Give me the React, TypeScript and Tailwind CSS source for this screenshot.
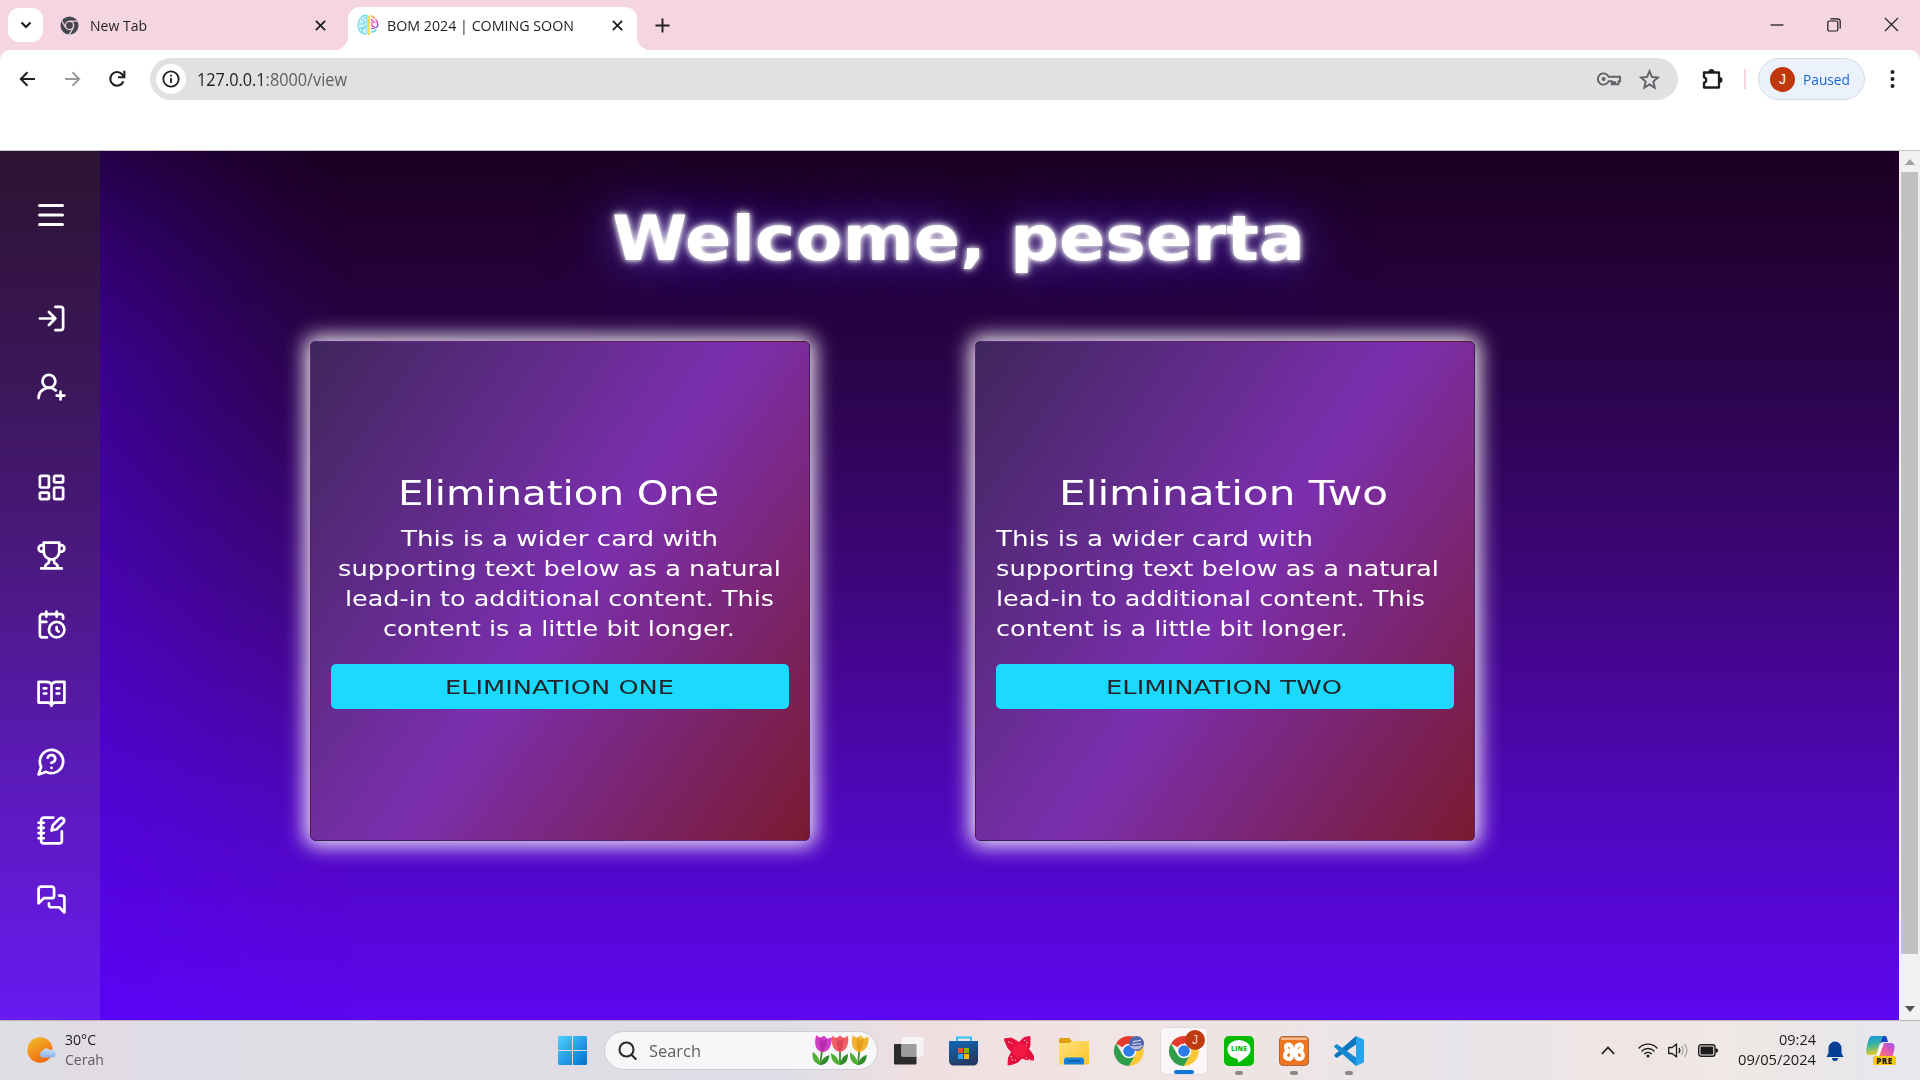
import { useLayoutEffect, useRef, type ReactNode } from "react";

/* Single line of text stretched horizontally to the width of its box. */
function Fit({ className, children }: { className: string; children: ReactNode }) {
  const box = useRef<HTMLSpanElement>(null);
  const inner = useRef<HTMLSpanElement>(null);
  useLayoutEffect(() => {
    const b = box.current;
    const i = inner.current;
    if (!b || !i) return;
    i.style.transform = "none";
    const natural = i.getBoundingClientRect().width;
    if (natural > 0) i.style.transform = `scaleX(${b.clientWidth / natural})`;
  }, []);
  return (
    <span ref={box} className={`block whitespace-nowrap text-left ${className}`}>
      <span ref={inner} className="inline-block origin-left align-top">
        {children}
      </span>
    </span>
  );
}

function Close({ size = 13, w = 1.9 }: { size?: number; w?: number }) {
  return (
    <svg width={size} height={size} viewBox="0 0 14 14" fill="none" stroke="#1f1f1f" strokeWidth={w}>
      <path d="M2 2l10 10M12 2L2 12" />
    </svg>
  );
}

function BrainIcon() {
  return (
    <svg width="22" height="22" viewBox="0 0 22 22" fill="none" strokeWidth="1.3">
      <path d="M10 1.500C6 0.500 4.500 3 4 4 1.500 5 1.500 8 1.500 9.500 0 12 1.500 14 2 15c0 3 3 4 4 4 2 2 4 1 4 0z" fill="#d4f5fa" />
      <g stroke="#7fdcec">
        <path d="M10 1.5C6 0.5 4.5 3 4 4 1.500 5 1.500 8 1.500 9.500 0 12 1.500 14 2 15c0 3 3 4 4 4 2 2 4 1 4 0z" />
        <path d="M4 5l3 2v3M2 10h4l3-2M2.500 14h3l2-2h2M5 18v-3l4-1M7 2l1.500 3" />
      </g>
      <path d="M12 1.500v19.500" stroke="#f5d84a" strokeWidth="1.8" />
      <path d="M14 2c2 0 3 1 4 3" stroke="#f3a64d" />
      <path d="M14 5l4 4M15 8v4l3 1M18.500 5.500c2 2 2.500 4 2 7" stroke="#e83fae" />
      <path d="M14 15l5-1.500c2-1 2-2 2-3" stroke="#7c5be6" />
      <path d="M14 18c3 0 5-1 5-3" stroke="#45d9e8" />
    </svg>
  );
}

function TabStrip() {
  return (
    <div className="flex h-[50px] w-full bg-[#f6d5e3]">
      <button className="ml-2 mt-2 flex h-[34px] w-[35px] shrink-0 items-center justify-center rounded-[11px] bg-white">
        <svg width="12" height="8" viewBox="0 0 12 8" fill="none" stroke="#1f1f1f" strokeWidth="2.2">
          <path d="M1.500 1.500L6 6l4.500-4.500" />
        </svg>
      </button>
      <div className="flex h-[50px] w-[305px] shrink-0 items-center pl-[17px]">
        <svg width="19" height="19" viewBox="0 0 20 20">
          <circle cx="10" cy="10" r="9.500" fill="#45484c" />
          <circle cx="10" cy="10" r="5" fill="#f6d5e3" />
          <circle cx="10" cy="10" r="3.600" fill="#45484c" />
          <path d="M10 5.500h9M6 12.300L1.700 4.800M14 12.300L9.700 19.800" stroke="#f6d5e3" strokeWidth="1.3" />
        </svg>
        <Fit className="ml-[11px] w-[57px] text-[15px] leading-[20px] text-[#1f1f1f]">New Tab</Fit>
        <span className="ml-[167px]">
          <Close />
        </span>
      </div>
      <div className="relative flex h-[50px] w-[289px] shrink-0 items-center">
        <div className="absolute left-0 top-[7px] h-[43px] w-full rounded-t-[12px] bg-white" />
        <div className="absolute -left-[14px] bottom-0 h-[14px] w-[14px] bg-[radial-gradient(circle_at_0_0,transparent_14px,white_14.500px)]" />
        <div className="absolute -right-[14px] bottom-0 h-[14px] w-[14px] bg-[radial-gradient(circle_at_100%_0,transparent_14px,white_14.500px)]" />
        <span className="relative ml-[9px]">
          <BrainIcon />
        </span>
        <Fit className="relative ml-[8px] w-[187px] text-[15px] leading-[20px] text-[#1f1f1f]">
          BOM 2024 | COMING SOON
        </Fit>
        <span className="relative ml-[37px]">
          <Close />
        </span>
      </div>
      <div className="flex h-[50px] items-center pl-[18px]">
        <svg width="15" height="15" viewBox="0 0 15 15" stroke="#1f1f1f" strokeWidth="1.900">
          <path d="M7.500 0.500v14M0.500 7.500h14" />
        </svg>
      </div>
      <div className="ml-auto flex h-[50px] items-center gap-[43px] pb-px pr-[21px]">
        <svg width="14" height="14" viewBox="0 0 14 14">
          <path d="M0.500 7h13" stroke="#111" strokeWidth="1.200" />
        </svg>
        <svg width="14" height="14" viewBox="0 0 14 14" fill="none" stroke="#1a1a1a" strokeWidth="1.200">
          <rect x="0.800" y="3" width="10" height="10" rx="1.500" />
          <path d="M3.500 0.800h7a2.700 2.700 0 0 1 2.700 2.700v7" />
        </svg>
        <svg width="15" height="15" viewBox="0 0 15 15" stroke="#222" strokeWidth="1.200">
          <path d="M1 1l13 13M14 1L1 14" />
        </svg>
      </div>
    </div>
  );
}

function Toolbar() {
  return (
    <div className="h-[101px] w-full bg-[#f6d5e3]">
      <div className="flex h-[101px] w-full items-start rounded-t-[10px] border-b border-[#c3c6c4] bg-white pt-[8px]">
        <div className="flex h-[42px] w-[150px] shrink-0 items-center">
          <svg className="ml-[19px]" width="17" height="16" viewBox="0 0 17 16" fill="none" stroke="#1f1f1f" strokeWidth="2">
            <path d="M16 8H2M8.500 1.200L1.800 8l6.700 6.800" />
          </svg>
          <svg className="ml-[28px]" width="17" height="16" viewBox="0 0 17 16" fill="none" stroke="#9c9c9c" strokeWidth="2">
            <path d="M1 8h14M8.500 1.200L15.200 8l-6.700 6.800" />
          </svg>
          <svg className="ml-[27px]" width="18" height="18" viewBox="0 0 18 18" fill="none" stroke="#1f1f1f" strokeWidth="2.100">
            <path d="M15.400 11.300a6.800 6.800 0 1 1-1.300-7L16 6.500" />
            <path d="M16.300 0.800v6.400H10" />
          </svg>
        </div>
        <div className="flex h-[42px] w-[1528px] shrink-0 items-center rounded-full bg-[#e1e1e1] pl-[6px]">
          <div className="flex h-[30px] w-[30px] items-center justify-center rounded-full bg-white">
            <svg width="18" height="18" viewBox="0 0 18 18" fill="none" stroke="#1f1f1f" strokeWidth="1.800">
              <circle cx="9" cy="9" r="7.700" />
              <path d="M9 8v5M9 4.800v1.800" />
            </svg>
          </div>
          <Fit className="ml-[11px] w-[150px] text-[17.500px] leading-[24px] text-[#5f6062]">
            <span className="text-[#1f1f1f]">127.0.0.1</span>:8000/view
          </Fit>
          <svg className="ml-auto" width="24" height="14" viewBox="0 0 24 14" fill="none" stroke="#5f6368" strokeWidth="1.900">
            <path d="M11.600 4.700a5.600 5.600 0 1 0 0 4.600h3.200v3h1.600v-2h1.600v2h3.400V9.500H23V4.700z" />
            <circle cx="6.600" cy="7" r="2" fill="#5f6368" stroke="none" />
          </svg>
          <svg className="ml-[18px] mr-[18px]" width="21" height="21" viewBox="0 0 24 24" fill="none" stroke="#5f6368" strokeWidth="2.200">
            <path d="M12 2.500l2.700 6.600 7.100.6-5.400 4.700 1.600 7-6-3.700-6 3.700 1.600-7L2.200 9.700l7.100-.6z" />
          </svg>
        </div>
        <div className="flex h-[42px] flex-1 items-center">
          <svg className="ml-[23px]" width="22" height="22" viewBox="0 0 22 22">
            <path d="M3 4.500h15v15H3v-4.800c3-.5 3-4.900 0-5.400z" fill="none" stroke="#1f1f1f" strokeWidth="2.300" strokeLinejoin="round" />
            <path d="M7.500 4a3 3 0 0 1 6 0zM18.500 9a3 3 0 0 1 0 6z" fill="#1f1f1f" />
          </svg>
          <div className="ml-[21px] h-[20px] w-[2px] bg-[#f6d5e3]" />
          <div className="ml-[12px] flex h-[42px] w-[107px] items-center rounded-full border border-[#d5dbe4] bg-[#ecf2fb] pl-[11px]">
            <div className="flex h-[25px] w-[25px] items-center justify-center rounded-full bg-[#c1370c] font-['Liberation_Sans',sans-serif] text-[14px] leading-none text-white">
              J
            </div>
            <Fit className="ml-[8px] w-[47px] text-[15px] leading-[20px] text-[#1a66d0]">Paused</Fit>
          </div>
          <svg className="ml-[25px]" width="5" height="20" viewBox="0 0 5 20" fill="#1f1f1f">
            <circle cx="2.500" cy="3" r="2" />
            <circle cx="2.500" cy="10" r="2" />
            <circle cx="2.500" cy="17" r="2" />
          </svg>
        </div>
      </div>
    </div>
  );
}

function SideIcon({ children }: { children: ReactNode }) {
  return (
    <svg
      className="shrink-0"
      width="31"
      height="31"
      viewBox="0 0 24 24"
      fill="none"
      stroke="white"
      strokeWidth="2.1"
      strokeLinecap="round"
      strokeLinejoin="round"
    >
      {children}
    </svg>
  );
}

function Sidebar() {
  return (
    <aside className="relative flex w-[100px] shrink-0 flex-col items-center bg-white/8 pl-[2px]">
      {/* soft violet glow cast to the right of the bar */}
      <div className="pointer-events-none absolute left-full top-0 h-full w-[250px] bg-[linear-gradient(90deg,rgba(85,0,255,0.38)_0%,rgba(85,0,255,0.28)_25%,rgba(85,0,255,0.16)_50%,rgba(85,0,255,0.06)_75%,rgba(85,0,255,0)_100%)] [mask-image:linear-gradient(180deg,rgba(0,0,0,0.45)_0px,rgba(0,0,0,0.75)_100px,black_220px)]" />
      <svg className="mt-[51px]" width="26" height="26" viewBox="0 0 26 26" stroke="white" strokeWidth="3" strokeLinecap="round">
        <path d="M1.500 3.500h23M1.500 13h23M1.500 22.500h23" />
      </svg>
      <div className="mt-[74.500px] flex flex-col gap-[37.700px]">
        <SideIcon>
          <path d="M15 3h4a2 2 0 0 1 2 2v14a2 2 0 0 1-2 2h-4M10 17l5-5-5-5M15 12H3" />
        </SideIcon>
        <SideIcon>
          <path d="M2 21a8 8 0 0 1 13.292-6" />
          <circle cx="10" cy="8" r="5" />
          <path d="M19 16v6M22 19h-6" />
        </SideIcon>
      </div>
      <div className="mt-[69.500px] flex flex-col gap-[37.700px]">
        <SideIcon>
          <rect x="3" y="3" width="7" height="9" rx="1" />
          <rect x="14" y="3" width="7" height="5" rx="1" />
          <rect x="14" y="12" width="7" height="9" rx="1" />
          <rect x="3" y="16" width="7" height="5" rx="1" />
        </SideIcon>
        <SideIcon>
          <path d="M6 9H4.500a2.500 2.500 0 0 1 0-5H6M18 9h1.500a2.500 2.500 0 0 0 0-5H18M4 22h16M10 14.660V17c0 .55-.47.98-.97 1.210C7.850 18.750 7 20.240 7 22M14 14.660V17c0 .55.47.98.97 1.210C16.150 18.750 17 20.240 17 22M18 2H6v7a6 6 0 0 0 12 0V2Z" />
        </SideIcon>
        <SideIcon>
          <path d="M21 7.500V6a2 2 0 0 0-2-2H5a2 2 0 0 0-2 2v14a2 2 0 0 0 2 2h3.500M16 2v4M8 2v4M3 10h5M17.500 17.500L16 16.300V14" />
          <circle cx="16" cy="16" r="6" />
        </SideIcon>
        <SideIcon>
          <path d="M12 5.500C11.500 3.500 9.500 3 8 3H2v16h7c1.500 0 3 .8 3 2.500 0-1.700 1.500-2.500 3-2.500h7V3h-6c-1.500 0-3.500.5-4 2.500zV21M6 8h2M6 12h2M16 8h2M16 12h2" />
        </SideIcon>
        <SideIcon>
          <path d="M7.900 20A9 9 0 1 0 4 16.100L2 22ZM9.090 9a3 3 0 0 1 5.830 1c0 2-3 3-3 3M12 17h.01" />
        </SideIcon>
        <SideIcon>
          <path d="M13.400 2H6a2 2 0 0 0-2 2v16a2 2 0 0 0 2 2h12a2 2 0 0 0 2-2v-7.400M2 6h4M2 10h4M2 14h4M2 18h4M18.400 2.600a2.170 2.170 0 0 1 3 3L16 11l-4 1 1-4Z" />
        </SideIcon>
        <SideIcon>
          <path d="M14 9a2 2 0 0 1-2 2H6l-4 4V4c0-1.100.9-2 2-2h8a2 2 0 0 1 2 2v5ZM18 9h2a2 2 0 0 1 2 2v11l-4-4h-6a2 2 0 0 1-2-2v-1" />
        </SideIcon>
      </div>
    </aside>
  );
}

function Card({ title, titleWidth, action, actionWidth, centered }: {
  title: string;
  titleWidth: string;
  action: string;
  actionWidth: string;
  centered: boolean;
}) {
  return (
    <article className="relative flex h-[500px] w-[500px] flex-col rounded-[6px] border border-black/20 bg-[linear-gradient(125deg,#40265c_0%,#7b2fae_51%,#7a1a30_100%)] px-[20px] shadow-[0_0_20px_5px_rgba(255,255,255,0.9)]">
      <h2 className="mt-[129px] flex justify-center pr-[4px] text-[34px] leading-[44px] text-white">
        <Fit className={titleWidth}>{title}</Fit>
      </h2>
      <div className={`mt-[9px] flex flex-col text-[20.500px] leading-[30px] text-white ${centered ? "items-center pr-[2px]" : "items-start"}`}>
        <Fit className="w-[317px]">This is a wider card with</Fit>
        <Fit className="w-[443px]">supporting text below as a natural</Fit>
        <Fit className="w-[429px]">lead-in to additional content. This</Fit>
        <Fit className="w-[352px]">content is a little bit longer.</Fit>
      </div>
      <button className="mt-[20px] flex h-[45px] w-full items-center justify-center rounded-[5px] bg-[#1cdaff] pr-[2px] text-[20px] leading-[30px] text-[#212529]">
        <Fit className={actionWidth}>{action}</Fit>
      </button>
    </article>
  );
}

function Page() {
  return (
    <div className="flex h-[869px] w-full font-['DejaVu_Sans',sans-serif]">
      <div className="flex w-[1899px] shrink-0 overflow-hidden bg-[linear-gradient(180deg,#1b0021_0%,#2d0450_29%,#3f067c_50%,#4f07b8_74%,#5c07f0_100%)]">
        <Sidebar />
        <main className="flex flex-1 flex-col">
          <h1 className="ml-[512px] mt-[46px] text-[63px] font-bold leading-[84px] text-white [text-shadow:0_0_5px_#fff,0_0_10px_rgba(255,255,255,0.8),0_0_40px_rgba(92,60,210,0.75),0_0_70px_rgba(80,50,200,0.75)]">
            <Fit className="w-[693px]">Welcome, peserta</Fit>
          </h1>
          <div className="ml-[210px] mt-[60px] flex gap-[165px]">
            <Card title="Elimination One" titleWidth="w-[321px]" action="ELIMINATION ONE" actionWidth="w-[229px]" centered />
            <Card title="Elimination Two" titleWidth="w-[329px]" action="ELIMINATION TWO" actionWidth="w-[236px]" centered={false} />
          </div>
        </main>
      </div>
      <div className="flex flex-1 flex-col items-center bg-[#f1f1f1]">
        <svg className="mt-[8px]" width="10" height="6" viewBox="0 0 10 6" fill="#a3a3a3">
          <path d="M0 6l5-6 5 6z" />
        </svg>
        <div className="mt-[7px] h-[782px] w-[17px] bg-[#c1c1c1]" />
        <svg className="mt-[52px]" width="10" height="6" viewBox="0 0 10 6" fill="#505050">
          <path d="M0 0l5 6 5-6z" />
        </svg>
      </div>
    </div>
  );
}

function Tulips() {
  const flowers = [
    { x: 12, fill: "#d23fc4", dark: "#a31f9b", tilt: 8 },
    { x: 32, fill: "#f0606a", dark: "#cf3146", tilt: 0 },
    { x: 50, fill: "#f3b32e", dark: "#d98a12", tilt: 5 },
  ];
  return (
    <svg width="62" height="31" viewBox="0 0 62 31">
      {flowers.map((f) => (
        <g key={f.x} transform={`rotate(${f.tilt} ${f.x} 30)`}>
          <path d={`M${f.x} 14v16`} stroke="#3b8f2d" strokeWidth="1.800" />
          <path d={`M${f.x} 30c-1-6-4-9-9-12 0 6 2 11 9 12z`} fill="#4fae35" />
          <path d={`M${f.x} 30c1-6 3-9 8-11 0 6-2 10-8 11z`} fill="#2f8a2b" />
          <path d={`M${f.x - 8} 1l4.500 2 3.500-2.500 3.500 2.500 4.500-2c1 8-1 15-8 16-7-1-9-8-8-16z`} fill={f.fill} />
          <path d={`M${f.x - 3} 3c-1 6 0 10 3 14 3-4 4-8 3-14l-3 3z`} fill={f.dark} opacity="0.55" />
        </g>
      ))}
    </svg>
  );
}

function ChromeLogo({ children }: { children?: ReactNode }) {
  return (
    <svg className="shrink-0 overflow-visible" width="30" height="30" viewBox="0 0 30 30">
      <path d="M15 15L2 7.500A15 15 0 0 1 28 7.500H15z" fill="#e33b2e" />
      <path d="M15 15L8.500 18.750 2 7.500A15 15 0 0 0 15 30l6.500-11.250z" fill="#2f9e4b" />
      <path d="M15 8h13A15 15 0 0 1 15 30l6.500-11.250z" fill="#fcc934" />
      <circle cx="15" cy="15" r="7.300" fill="#fff" />
      <circle cx="15" cy="15" r="5.800" fill="#2b7de9" />
      {children}
    </svg>
  );
}

function Running({ children }: { children: ReactNode }) {
  return (
    <div className="relative h-[30px] w-[30px]">
      {children}
      <div className="absolute -bottom-[9px] left-[11px] h-[4px] w-[8px] rounded-full bg-[#8c8785]" />
    </div>
  );
}

function Taskbar() {
  return (
    <div className="flex h-[60px] w-full items-center border-t border-[#b9b6bf] bg-[linear-gradient(90deg,#dedfe2_0%,#e2dbe4_5%,#dddde6_11%,#dfe0e3_18%,#dfdce4_30%,#dfdee6_41%,#efdfe0_48%,#f1e4e5_58%,#eee4e4_66%,#e8e5ea_76%,#efe5e3_84%,#efe8e4_90%,#e8e6ea_97%,#e8e8ec_100%)]">
      <div className="flex h-full w-[558px] shrink-0 items-center pl-[27px]">
        <svg width="29" height="28" viewBox="0 0 29 28">
          <defs>
            <linearGradient id="sun" x1="0" y1="0" x2="0.600" y2="1">
              <stop offset="0" stopColor="#f5c22d" />
              <stop offset="1" stopColor="#f0660c" />
            </linearGradient>
            <linearGradient id="cloud" x1="0" y1="0" x2="0" y2="1">
              <stop offset="0" stopColor="#c9defa" />
              <stop offset="1" stopColor="#8fb2ea" />
            </linearGradient>
          </defs>
          <circle cx="13" cy="13" r="12.700" fill="url(#sun)" />
          <path d="M14.500 20.500a4 4 0 0 1 .2-6.200 5 5 0 0 1 8.300-1.300 3.800 3.800 0 0 1 3 7.500z" fill="url(#cloud)" />
        </svg>
        <div className="ml-[9px] flex flex-col gap-px pb-[3px] text-[14px] leading-[19px]">
          <Fit className="w-[31px] text-[#1b1b1b]">30°C</Fit>
          <Fit className="w-[39px] text-[#5c5c60]">Cerah</Fit>
        </div>
      </div>
      <svg className="shrink-0" width="29" height="29" viewBox="0 0 29 29">
        <defs>
          <linearGradient id="win" x1="0" y1="0" x2="1" y2="1">
            <stop offset="0" stopColor="#4fd0ff" />
            <stop offset="1" stopColor="#0070d1" />
          </linearGradient>
        </defs>
        <path d="M1 0h13v14H0V1zM15 0h13l1 1v13H15zM0 15h14v14H1l-1-1zM15 15h14v13l-1 1H15z" fill="url(#win)" />
      </svg>
      <div className="ml-[17px] flex h-[39px] w-[274px] shrink-0 items-center rounded-full border border-[#cfcbd3] bg-[#f7f6f8] pl-[13px]">
        <svg width="19" height="20" viewBox="0 0 19 20" fill="none" stroke="#2b2b2b" strokeWidth="2.100" strokeLinecap="round">
          <circle cx="8.500" cy="8.500" r="7" />
          <path d="M13.500 13.800l4.200 4.200" />
        </svg>
        <Fit className="ml-[12px] w-[52px] text-[16.500px] leading-[22px] text-[#606064]">Search</Fit>
        <span className="ml-auto pr-[7px]">
          <Tulips />
        </span>
      </div>
      <div className="ml-[16px] flex items-center gap-[25px]">
        <svg width="30" height="30" viewBox="0 0 30 30">
          <rect x="0" y="8" width="22.500" height="20.500" rx="1" fill="#2b2b2b" />
          <rect x="7.500" y="1" width="22" height="19.500" rx="1" fill="#f4f4f4" opacity="0.95" />
          <rect x="7.500" y="8" width="15" height="12.500" fill="#9d9d9d" />
        </svg>
        <svg width="30" height="30" viewBox="0 0 30 30">
          <defs>
            <linearGradient id="store" x1="0" y1="0" x2="0.400" y2="1">
              <stop offset="0" stopColor="#0f68b8" />
              <stop offset="1" stopColor="#233a66" />
            </linearGradient>
          </defs>
          <path d="M8 6V1.500h14V6" fill="none" stroke="#2cc3f1" strokeWidth="2" />
          <path d="M0 5h29v20a4.500 4.500 0 0 1-4.500 4.500h-20A4.500 4.500 0 0 1 0 25z" fill="url(#store)" />
          <path d="M9 12h5v5H9z" fill="#f25022" />
          <path d="M15 12h5v5h-5z" fill="#7fba00" />
          <path d="M9 18h5v5H9z" fill="#2aa9f0" />
          <path d="M15 18h5v5h-5z" fill="#ffb900" />
        </svg>
        <svg width="30" height="30" viewBox="0 0 30 30">
          <path
            d="M0 3l7-1 4 2 4 2.500 5-5 6-1v9l-1.500 3.500 2.500 3 3 5v3l-8-.5-4-1.500-4 4-5 2-5 1 .5-7 3-6-3.500-4z"
            fill="#e60f3c"
            stroke="#e60f3c"
            strokeLinejoin="round"
          />
          <circle cx="15.500" cy="14.500" r="7" fill="#f01a45" />
          <path d="M4 6l3 0 2 3M20 4l3 2-1 4M26 24l-5-3M7 20l1 4 4 0" stroke="#ffdde3" strokeWidth="1" strokeDasharray="1.500 2" fill="none" />
        </svg>
        <svg width="30" height="30" viewBox="0 0 30 30">
          <defs>
            <linearGradient id="folder" x1="0" y1="0" x2="1" y2="1">
              <stop offset="0" stopColor="#ffe07a" />
              <stop offset="1" stopColor="#fcc52b" />
            </linearGradient>
          </defs>
          <path d="M0 3.500A1.500 1.500 0 0 1 1.500 2H10l3 3v5H0z" fill="#dea10c" />
          <path d="M0 7h10l3-2h16.500a.5.5 0 0 1 .5.500v22a1 1 0 0 1-1 1H1a1 1 0 0 1-1-1z" fill="url(#folder)" />
          <path d="M5 28.500v-4a3 3 0 0 1 3-3h14a3 3 0 0 1 3 3v4z" fill="#1580d8" />
          <path d="M8.500 25h13" stroke="#0b4f9a" strokeWidth="1.200" />
        </svg>
        <ChromeLogo>
          <circle cx="22.500" cy="7.500" r="7.500" fill="#4d66b0" />
          <path d="M15.500 10c3 0 6 1 13.500-1a7.500 7.500 0 0 1-13 1.500z" fill="#b9bcdc" />
          <path d="M19 6c2-2 4 0 8-2M18 8c3 1 5-1 9 0" stroke="#dfe2f3" strokeWidth="1.200" fill="none" />
        </ChromeLogo>
        <div className="relative -mx-[9px] flex h-[48px] w-[48px] items-center justify-center rounded-[5px] border border-[#e3dada] bg-[#faf5f6]">
          <ChromeLogo />
          <div className="absolute left-[24px] top-[2px] flex h-[20px] w-[20px] items-center justify-center rounded-full bg-[#c03a10] font-['Liberation_Sans',sans-serif] text-[12px] leading-none text-[#f7d8cc]">
            J
          </div>
          <div className="absolute bottom-0 left-[13px] h-[4px] w-[20px] rounded-full bg-[#0e78d4]" />
        </div>
        <Running>
          <div className="relative flex h-[30px] w-[30px] items-center justify-center rounded-[5px] bg-[#05ba05]">
            <svg className="absolute left-0 top-0" width="30" height="30" viewBox="0 0 30 30" fill="#fff">
              <ellipse cx="15" cy="13.500" rx="11.500" ry="9.500" />
              <path d="M13 22l1.500 4.500C19 24 23 21 25 17z" />
            </svg>
            <span className="relative pb-[3px] text-[6.500px] font-black leading-none tracking-[0.200px] text-[#05ba05]">LINE</span>
          </div>
        </Running>
        <Running>
          <svg width="30" height="30" viewBox="0 0 30 30">
            <rect x="0.500" y="0.500" width="29" height="29" rx="3.500" fill="#ee7623" stroke="#a8663c" />
            <rect x="2" y="1.500" width="26" height="2.500" rx="1" fill="#f6b98a" />
            <g fill="none" stroke="#fff" strokeWidth="4" strokeLinecap="round" strokeLinejoin="round">
              <path d="M9 8.500c-3 1-2.500 5 .5 6.500-4.500 1.500-4.500 8 0 8 2.500 0 3.500-1.500 3.500-4v-6c0-2.500-1-4.500-4-4.500" />
              <path d="M21 8.500c3 1 2.500 5-.5 6.500 4.500 1.500 4.500 8 0 8-2.500 0-3.500-1.500-3.500-4v-6c0-2.500 1-4.500 4-4.500" />
              <path d="M11 15.500h8" />
            </g>
          </svg>
        </Running>
        <Running>
          <svg width="30" height="30" viewBox="0 0 30 30">
            <path d="M22 0L0.800 18.500c-.8.700-.8 1.300 0 2l2 1.600L22 8.500z" fill="#0a77bd" />
            <path d="M22 30L0.800 11.500c-.8-.700-.8-1.300 0-2l2-1.600L22 21.500z" fill="#1489d0" />
            <path d="M22 0l7.200 3.300c.5.300.8.700.8 1.300v20.800c0 .6-.3 1-.8 1.300L22 30z" fill="#28a3ee" />
          </svg>
        </Running>
      </div>
      <div className="ml-auto flex items-center">
        <svg width="14" height="9" viewBox="0 0 14 9" fill="none" stroke="#1b1b1b" strokeWidth="1.700">
          <path d="M0.800 8L7 1.500 13.200 8" />
        </svg>
        <svg className="mb-px ml-[23px]" width="20" height="16" viewBox="0 0 20 16" fill="none" stroke="#1b1b1b" strokeWidth="1.400" strokeLinecap="round">
          <path d="M1 6a12.500 12.500 0 0 1 18 0M4 9a8.500 8.500 0 0 1 12 0M6.800 11.800a4.600 4.600 0 0 1 6.400 0" />
          <circle cx="10" cy="14" r="1.500" fill="#1b1b1b" stroke="none" />
        </svg>
        <svg className="mb-px ml-[10px]" width="20" height="17" viewBox="0 0 20 17" fill="none" stroke="#1b1b1b" strokeWidth="1.300" strokeLinejoin="round">
          <path d="M0.700 5.500h3.500L8.500 2v13l-4.300-3.500H.7zM11 6c1 1.500 1 3.500 0 5" />
          <path d="M13.500 4c2 2.500 2 6.500 0 9M16.500 2c3 4 3 9 0 13" stroke="#aaa5a5" />
        </svg>
        <svg className="mb-px ml-[10px]" width="20" height="13" viewBox="0 0 20 13">
          <rect x="0.700" y="0.700" width="16.300" height="11.600" rx="2.500" fill="none" stroke="#1b1b1b" strokeWidth="1.400" />
          <rect x="2.500" y="2.500" width="12.700" height="8" rx="1" fill="#1b1b1b" />
          <path d="M17.500 4.500h1a1.500 1.500 0 0 1 1.500 1.500v1a1.500 1.500 0 0 1-1.500 1.500h-1z" fill="#1b1b1b" />
        </svg>
        <div className="ml-[20px] flex flex-col items-end gap-px pb-[3px] text-[14px] leading-[19px] text-[#1b1b1b]">
          <Fit className="w-[37px]">09:24</Fit>
          <Fit className="w-[78px]">09/05/2024</Fit>
        </div>
        <svg className="ml-[10px]" width="18" height="20" viewBox="0 0 18 20" fill="#033f92">
          <path d="M9 0.500a6.500 6.500 0 0 1 6.500 6.500v5l2 4H.5l2-4V7A6.500 6.500 0 0 1 9 .5zM6 17h6a3 3 0 0 1-6 0z" />
        </svg>
        <div className="relative ml-[22px] mr-[24px] h-[29px] w-[30px]">
          <svg width="30" height="29" viewBox="0 0 30 29">
            <defs>
              <linearGradient id="cpA" x1="0" y1="0" x2="0.200" y2="1">
                <stop offset="0" stopColor="#1396ee" />
                <stop offset="0.500" stopColor="#3bb59a" />
                <stop offset="1" stopColor="#e3cc31" />
              </linearGradient>
              <linearGradient id="cpB" x1="1" y1="0" x2="0.200" y2="1">
                <stop offset="0" stopColor="#9a55ef" />
                <stop offset="0.500" stopColor="#e758a8" />
                <stop offset="1" stopColor="#fb8a50" />
              </linearGradient>
            </defs>
            <path d="M6 0h12c3 0 3 3 4 6h-5c-3 0-4 3-5 7l-2 6H3c-4 0-3-5-2-9S3 0 6 0z" fill="url(#cpA)" />
            <path d="M17 0h2c2 0 2 3 3 6h-5c-2 0-2 1-3 2z" fill="#1746c8" />
            <path d="M19 7h6c4 0 4 4 3 8s-2 9-6 9H10c2 0 3-3 4-6l2-7c.6-2 1-4 3-4z" fill="url(#cpB)" />
            <path d="M17 8c-2 2-3 9-5 11" stroke="#fff" strokeWidth="1.800" fill="none" />
          </svg>
          <div className="absolute bottom-0 right-0 flex h-[9px] w-[23px] items-center justify-center rounded-[2px] bg-[#fdc90e] text-[8px] font-extrabold leading-none tracking-[0.500px] text-[#1b1b1b]">
            PRE
          </div>
        </div>
      </div>
    </div>
  );
}

export default function App() {
  return (
    <div className="flex h-[1080px] w-[1920px] flex-col overflow-hidden bg-white font-['Open_Sans','Noto_Sans',sans-serif]">
      <TabStrip />
      <Toolbar />
      <Page />
      <Taskbar />
    </div>
  );
}
